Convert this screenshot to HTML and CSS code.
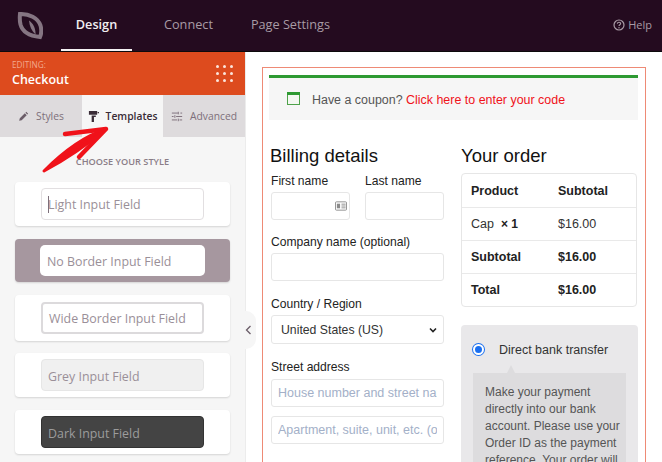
FILE: index.html
```html
<!DOCTYPE html>
<html lang="en">
<head>
<meta charset="utf-8">
<title>Checkout</title>
<link rel="stylesheet" href="styles.css">
</head>
<body>
<div class="app">
  <header class="topbar">
    <svg class="logo" width="28" height="30" viewBox="0 0 28 30"><path d="M5 3C14 2.500 23 7 25.500 14.500c1.300 4.500.8 8.500-.5 11.500C15 25 7.500 21 5.500 13.500 4.700 10 4.600 6.500 5 3Z" fill="none" stroke="#857582" stroke-width="4"/><path d="M14 9.500c4.500 3 6.800 8.500 6.500 14C16.500 20 14.500 15 14 9.500Z" fill="#857582"/></svg>
    <nav class="nav">
      <a class="nav-item active">Design</a>
      <a class="nav-item">Connect</a>
      <a class="nav-item">Page Settings</a>
    </nav>
    <a class="help">
      <svg width="12" height="12" viewBox="0 0 12 12"><circle cx="6" cy="6" r="5" fill="none" stroke="#a89ba5" stroke-width="1.200"/><path d="M4.300 4.700C4.400 3.700 5.100 3.200 6 3.200c1 0 1.700.6 1.700 1.400 0 1.200-1.700 1.200-1.700 2.500" fill="none" stroke="#a89ba5" stroke-width="1.100"/><circle cx="6" cy="8.800" r=".7" fill="#a89ba5"/></svg>
      Help
    </a>
  </header>
  <div class="main">
    <aside class="sidebar">
      <div class="editing">
        <div>
          <div class="editing-label">EDITING:</div>
          <div class="editing-title">Checkout</div>
        </div>
        <div class="dots"><i></i><i></i><i></i><i></i><i></i><i></i><i></i><i></i><i></i></div>
      </div>
      <div class="tabs">
        <div class="tab">
          <svg width="11" height="11" viewBox="0 0 14 14"><path d="M1.500 12.500l.8-3.200 6.400-6.400 2.400 2.400-6.400 6.400-3.200.8ZM9.500 2.100l1-1 2.400 2.400-1 1Z" fill="#6b5d68"/></svg>
          Styles
        </div>
        <div class="tab tab-active">
          <svg width="11" height="13" viewBox="0 0 12 14"><path d="M1 1h9v4H1ZM10.500 2H12v1.500h-1.500ZM4 6h4.500v1.500H6.500V13H4Z" fill="#3a2c37"/></svg>
          Templates
        </div>
        <div class="tab">
          <svg width="12" height="11" viewBox="0 0 14 12" fill="none" stroke="#7d6f7a" stroke-width="1.100"><path d="M1 2h7M11 2h2M1 6h2M6 6h7M1 10h6M10 10h3M8.500 .5v3M4.500 4.500v3M8.500 8.500v3"/></svg>
          Advanced
        </div>
      </div>
      <div class="style-pane">
        <h4 class="choose">CHOOSE YOUR STYLE</h4>
        <div class="card"><div class="field light"><span class="caret"></span>Light Input Field</div></div>
        <div class="card card-selected"><div class="field noborder">No Border Input Field</div></div>
        <div class="card card-wide"><div class="field wide">Wide Border Input Field</div></div>
        <div class="card"><div class="field grey">Grey Input Field</div></div>
        <div class="card"><div class="field dark">Dark Input Field</div></div>
      </div>
      <div class="collapse">
        <svg width="7" height="10" viewBox="0 0 7 10"><path d="M5.500 1 1.500 5l4 4" fill="none" stroke="#6b5d68" stroke-width="1.300"/></svg>
      </div>
    </aside>
    <main class="canvas">
      <div class="frame">
        <div class="coupon">
          <svg class="coupon-icon" width="14" height="14" viewBox="0 0 14 14"><rect x=".5" y=".5" width="12" height="12" fill="#f4f8f2" stroke="#4ea24a"/><rect x="0" y="0" width="13" height="3" fill="#2e9a32"/></svg>
          <span>Have a coupon? <a class="coupon-link">Click here to enter your code</a></span>
        </div>
        <div class="columns">
          <section class="billing">
            <h3 class="heading heading-billing">Billing details</h3>
            <div class="name-row">
              <div class="group">
                <label>First name</label>
                <div class="input input-card">
                  <svg width="12" height="10" viewBox="0 0 13 10"><rect x=".5" y=".5" width="12" height="9" rx="1" fill="none" stroke="#8a8a8a"/><rect x="2" y="2.500" width="3.500" height="5" fill="#8a8a8a"/><path d="M7 3h4.500M7 5h4.500M7 7h4.500" stroke="#8a8a8a"/></svg>
                </div>
              </div>
              <div class="group">
                <label>Last name</label>
                <div class="input"></div>
              </div>
            </div>
            <div class="group gap">
              <label>Company name (optional)</label>
              <div class="input"></div>
            </div>
            <div class="group gap-country">
              <label>Country / Region</label>
              <div class="input select">United States (US)
                <svg width="8" height="6" viewBox="0 0 8 6"><path d="M1 1.500 4 4.500 7 1.500" fill="none" stroke="#222" stroke-width="1.600"/></svg>
              </div>
            </div>
            <div class="group gap-street">
              <label>Street address</label>
              <div class="input placeholder"><span>House number and street name</span></div>
              <div class="input placeholder second"><span>Apartment, suite, unit, etc. (optional)</span></div>
            </div>
            <div class="group town"><label>Town / City</label></div>
          </section>
          <section class="order">
            <h3 class="heading">Your order</h3>
            <div class="table">
              <div class="row strong"><span>Product</span><span>Subtotal</span></div>
              <div class="row"><span>Cap &nbsp;<b class="qty">× 1</b></span><span>$16.00</span></div>
              <div class="row strong"><span>Subtotal</span><span>$16.00</span></div>
              <div class="row strong"><span>Total</span><span>$16.00</span></div>
            </div>
            <div class="payment">
              <div class="pay-option"><span class="radio"></span>Direct bank transfer</div>
              <div class="pay-desc">Make your payment directly into our bank account. Please use your Order ID as the payment reference. Your order will not be shipped until the funds have cleared.</div>
            </div>
          </section>
        </div>
      </div>
    </main>
  </div>
  <svg class="arrow" width="90" height="60" viewBox="0 0 90 60"><path d="M65 7C44 14 22 30 3 49c22-12 44-27 62-42Z" fill="#f0121a" stroke="#f0121a" stroke-width="3" stroke-linejoin="round"/><path d="M24 12 65 7 38 35" fill="none" stroke="#f0121a" stroke-width="4.500" stroke-linecap="round" stroke-linejoin="round"/></svg>
</div>
</body>
</html>
```
FILE: styles.css
```css
* { box-sizing: border-box; }
html, body { margin: 0; padding: 0; }
body { width: 662px; height: 462px; overflow: hidden; background: #fff; font-family: "Liberation Sans", Arial, sans-serif; }
.app { position: relative; width: 662px; height: 462px; overflow: hidden; display: flex; flex-direction: column; }

.topbar { height: 52px; flex: none; display: flex; align-items: center; background: #240b1f; border-bottom: 1px solid #0d0a0c; font-family: "Open Sans", sans-serif; }
.logo { margin: 0 0 0 15px; flex: none; }
.nav { display: flex; height: 51px; margin-left: 18px; }
.nav-item { display: flex; align-items: center; padding: 0 0 3px; font-size: 12.700px; font-weight: 400; color: #a89ba5; margin-right: 38px; }
.nav-item.active { color: #f2eff1; font-weight: 600; border-bottom: 2px solid #f4f2f3; width: 71px; justify-content: center; padding: 0 0 1px; margin-right: 32px; }
.help { margin-left: auto; margin-right: 10px; padding-bottom: 2px; display: flex; align-items: center; gap: 3px; font-size: 11px; color: #a89ba5; }

.main { flex: 1; display: flex; min-height: 0; }
.sidebar { position: relative; width: 246px; flex: none; background: #f6f6f6; border-right: 1px solid #ececec; font-family: "Open Sans", sans-serif; }
.editing { height: 43px; background: #dd4b1e; padding: 8px 12px 0 12px; display: flex; justify-content: space-between; color: #fff; }
.editing-label { font-size: 8.200px; line-height: 10px; color: #f2a88c; }
.editing-title { font-size: 12.500px; font-weight: 600; line-height: 20px; }
.dots { display: grid; grid-template-columns: repeat(3, 3px); grid-auto-rows: 3px; gap: 4px; margin: 5px 0 0; }
.dots i { width: 3px; height: 3px; border-radius: 50%; background: #fbe5dc; }

.tabs { height: 42px; display: grid; grid-template-columns: 82px 81px 1fr; background: #dedbdd; }
.tab { display: flex; align-items: center; justify-content: center; gap: 7px; font-size: 10.300px; color: #7d6f7a; }
.tab-active { background: #f6f6f6; color: #3a2c37; font-weight: 600; }

.style-pane { padding: 0 15px; }
.choose { margin: 19px 0 14px; height: 12px; line-height: 12px; text-align: center; font-size: 9.200px; font-weight: 600; color: #8a7d87; }
.card { height: 44px; margin-bottom: 13px; background: #fff; border-radius: 4px; box-shadow: 0 1px 2px rgba(0,0,0,.14); display: flex; align-items: center; justify-content: center; }
.card-selected { background: #a6979f; height: 43px; }
.card-wide { height: 46px; margin-bottom: 12px; }
.field { position: relative; width: 163px; height: 32px; border-radius: 4px; display: flex; align-items: center; padding-left: 7px; font-size: 12.400px; color: #9a8f98; background: #fff; }
.light { border: 1px solid #e2dfe1; padding-left: 6px; }
.noborder { width: 165px; height: 31px; border-radius: 5px; padding: 1px 0 0 7px; }
.wide { border: 2px solid #dcdadc; padding-left: 6px; }
.grey { background: #f0f0f0; border: 1px solid #e6e6e6; padding: 2px 0 0 6px; }
.dark { background: #444; border: 1px solid #333; padding: 2px 0 0 6px; color: #9c9c9c; }
.caret { position: absolute; left: 6px; top: 7px; width: 1px; height: 17px; background: #7d6f7a; }

.collapse { position: absolute; left: 241px; top: 259px; width: 15px; height: 38px; border-radius: 0 10px 10px 0; background: #f6f6f6; display: flex; align-items: center; justify-content: center; }

.canvas { flex: 1; min-width: 0; padding: 15px 16px 0; background: #fff; overflow: hidden; }
.frame { border: 1px solid #ee8a75; border-bottom: 0; height: 400px; padding: 7px 7px 0 6px; overflow: hidden; }
.coupon { height: 45px; background: #f6f6f6; border-top: 3px solid #2e9a32; display: flex; align-items: center; padding: 2px 0 0 18px; gap: 11px; font-size: 12.450px; color: #555; }
.coupon-icon { flex: none; margin-bottom: 2px; }
.coupon-link { color: #f0121a; }

.columns { display: flex; margin-top: 25px; padding-left: 2px; }
.billing { width: 173px; flex: none; }
.order { width: 177px; flex: none; margin-left: 17px; }
.heading { margin: 0 0 7px; height: 22px; line-height: 22px; font-size: 18.500px; font-weight: 400; color: #111; }
.heading-billing { margin-left: -1px; }
.name-row { display: grid; grid-template-columns: 79px 79px; gap: 15px; }
.group label { display: block; height: 18px; font-size: 12.100px; line-height: 14px; color: #222; }
.gap { margin-top: 15px; }
.gap-country { margin-top: 16px; }
.gap-street { margin-top: 16px; }
.gap-street label { height: 19px; }
.input { position: relative; height: 28px; border: 1px solid #e6e6e6; border-radius: 3px; background: #fff; display: flex; align-items: center; font-size: 12.500px; overflow: hidden; white-space: nowrap; }
.input-card { justify-content: flex-end; padding-right: 2px; }
.select { height: 29px; padding: 0 6px 0 9px; justify-content: space-between; color: #333; font-size: 12.250px; }
.placeholder { padding: 0 6px; color: #a3b0c8; }
.placeholder span { display: block; overflow: hidden; }
.second { margin-top: 9px; }
.town { margin-top: 16px; }

.table { border: 1px solid #e6e6e6; border-radius: 4px; width: 176px; margin-top: -1px; }
.row { display: grid; grid-template-columns: 87px 1fr; align-items: center; height: 33px; padding-left: 9px; font-size: 12.500px; color: #333; border-top: 1px solid #e9e9e9; }
.row:first-child { border-top: 0; }
.strong { font-weight: 700; color: #222; }
.qty { font-size: 12px; color: #222; }
.payment { margin-top: 18px; background: #e9e8ea; border-radius: 4px; padding: 17px 12px 0; height: 200px; }
.pay-option { display: flex; align-items: center; height: 16px; font-size: 12.500px; color: #333; }
.radio { width: 11px; height: 11px; margin: 0 15px 2px 0; border-radius: 50%; background: #1a6ff0; border: 2px solid #fff; box-shadow: 0 0 0 1px #1a6ff0; flex: none; }
.pay-desc { position: relative; margin-top: 15px; background: #dddcde; padding: 11px 4px 0 12px; width: 153px; font-size: 12px; line-height: 17px; color: #555; height: 120px; }
.pay-desc::before { content: ""; position: absolute; left: 34px; top: -8px; border: 4.500px solid transparent; border-top: 0; border-bottom: 8px solid #dddcde; }

.arrow { position: absolute; left: 41px; top: 122px; }
```
